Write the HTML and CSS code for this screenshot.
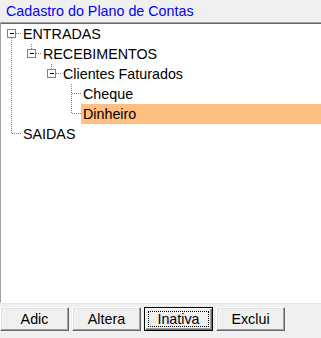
FILE: index.html
```html
<!DOCTYPE html>
<html lang="pt">
<head>
    <meta charset="UTF-8">
    <title>Cadastro do Plano de Contas</title>
    <link rel="stylesheet" href="styles.css">
</head>
<body>
    <div class="window">
        <div class="title">Cadastro do Plano de Contas</div>

        <div class="tree">
            <!-- ENTRADAS -->
            <div class="row">
                <svg class="cell" width="20" height="20">
                    <path class="dot" d="M10.5 14V20M15 9.5H20"/>
                    <rect class="box" x="6.5" y="5.5" width="8" height="8"/>
                    <path class="minus" d="M8.5 9.5H13"/>
                </svg>
                <span class="label">ENTRADAS</span>
            </div>
            <!-- RECEBIMENTOS -->
            <div class="row">
                <svg class="cell" width="20" height="20"><path class="dot" d="M10.5 0V20"/></svg>
                <svg class="cell" width="20" height="20">
                    <path class="dot" d="M10.5 0V5M15 9.5H20"/>
                    <rect class="box" x="6.5" y="5.5" width="8" height="8"/>
                    <path class="minus" d="M8.5 9.5H13"/>
                </svg>
                <span class="label">RECEBIMENTOS</span>
            </div>
            <!-- Clientes Faturados -->
            <div class="row">
                <svg class="cell" width="20" height="20"><path class="dot" d="M10.5 0V20"/></svg>
                <span class="cell"></span>
                <svg class="cell" width="20" height="20">
                    <path class="dot" d="M10.5 0V5M15 9.5H20"/>
                    <rect class="box" x="6.5" y="5.5" width="8" height="8"/>
                    <path class="minus" d="M8.5 9.5H13"/>
                </svg>
                <span class="label">Clientes Faturados</span>
            </div>
            <!-- Cheque -->
            <div class="row">
                <svg class="cell" width="20" height="20"><path class="dot" d="M10.5 0V20"/></svg>
                <span class="cell"></span>
                <span class="cell"></span>
                <svg class="cell" width="20" height="20"><path class="dot" d="M10.5 0V20M11 9.5H20"/></svg>
                <span class="label">Cheque</span>
            </div>
            <!-- Dinheiro -->
            <div class="row">
                <svg class="cell" width="20" height="20"><path class="dot" d="M10.5 0V20"/></svg>
                <span class="cell"></span>
                <span class="cell"></span>
                <svg class="cell" width="20" height="20"><path class="dot" d="M10.5 0V10M11 9.5H20"/></svg>
                <span class="label selected">Dinheiro</span>
            </div>
            <!-- SAIDAS -->
            <div class="row">
                <svg class="cell" width="20" height="20"><path class="dot" d="M10.5 0V10M11 9.5H20"/></svg>
                <span class="label">SAIDAS</span>
            </div>
        </div>

        <div class="buttons">
            <button class="btn">Adic</button>
            <button class="btn">Altera</button>
            <button class="btn focused"><span class="focus">Inativa</span></button>
            <button class="btn">Exclui</button>
        </div>
    </div>
</body>
</html>
```

FILE: styles.css
```css
body {
    margin: 0;
    padding: 0;
    width: 321px;
    height: 338px;
    overflow: hidden;
    background-color: #f0f0f0;
    font-family: 'Liberation Sans', Arial, sans-serif;
    font-size: 14.3px;
}
.window {
    display: flex;
    flex-direction: column;
}
.title {
    height: 22px;
    line-height: 22px;
    padding-left: 6px;
    color: #0000ff;
}
.tree {
    width: 330px;
    height: 278px;
    background-color: #fff;
    border-top: 1px solid #a0a0a0;
    border-left: 1px solid #a0a0a0;
    border-bottom: 1px solid #fff;
    box-shadow: inset 0 1px #696969, 0 1px #e3e3e3;
    padding-top: 1px;
    box-sizing: content-box;
}
.row {
    display: flex;
    height: 20px;
}
.cell {
    display: block;
    width: 20px;
    height: 20px;
    flex: none;
}
.dot {
    fill: none;
    stroke: #808080;
    stroke-width: 1;
    stroke-dasharray: 1 1;
    shape-rendering: crispEdges;
}
.box {
    fill: #fff;
    stroke: #808080;
    shape-rendering: crispEdges;
}
.minus {
    stroke: #000;
    shape-rendering: crispEdges;
}
.label {
    line-height: 20px;
    padding: 0 2px;
    color: #000;
}
.selected {
    flex: 1;
    background-color: #ffbf80;
}
.buttons {
    display: flex;
    gap: 3px;
    margin-top: 4px;
}
.btn {
    width: 69px;
    height: 24px;
    padding: 0;
    font-family: 'Liberation Sans', Arial, sans-serif;
    font-size: 14.3px;
    color: #000;
    background-color: #f0f0f0;
    border: 1px solid;
    border-color: #fff #696969 #696969 #fff;
    box-shadow: inset -1px -1px #a0a0a0, inset 1px 1px #e3e3e3;
}
.btn.focused {
    border: 1px solid #000;
    box-shadow: inset 1px 1px #fff, inset -1px -1px #696969, inset -2px -2px #a0a0a0;
    display: flex;
    padding: 3px;
}
.focus {
    flex: 1;
    display: flex;
    align-items: center;
    justify-content: center;
    border: 1px dotted #000;
}
```
